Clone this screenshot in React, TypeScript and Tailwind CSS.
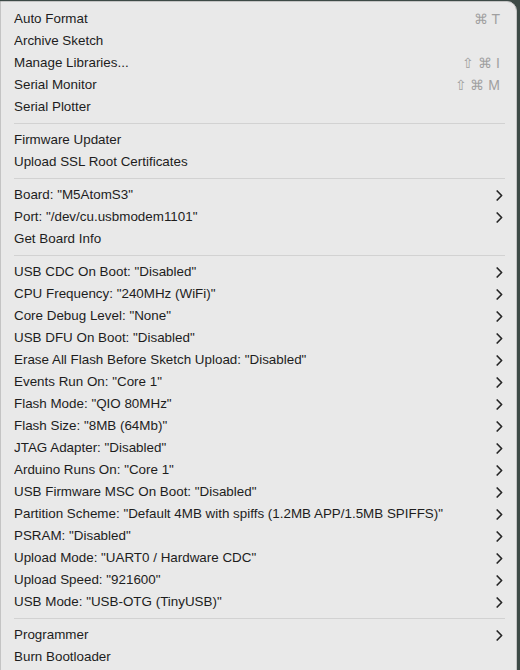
type Item = { label: string; shortcut?: string; sub?: boolean };

const groups: Item[][] = [
  [
    { label: "Auto Format", shortcut: "⌘ T" },
    { label: "Archive Sketch" },
    { label: "Manage Libraries...", shortcut: "⇧ ⌘ I" },
    { label: "Serial Monitor", shortcut: "⇧ ⌘ M" },
    { label: "Serial Plotter" },
  ],
  [{ label: "Firmware Updater" }, { label: "Upload SSL Root Certificates" }],
  [
    { label: 'Board: "M5AtomS3"', sub: true },
    { label: 'Port: "/dev/cu.usbmodem1101"', sub: true },
    { label: "Get Board Info" },
  ],
  [
    { label: 'USB CDC On Boot: "Disabled"', sub: true },
    { label: 'CPU Frequency: "240MHz (WiFi)"', sub: true },
    { label: 'Core Debug Level: "None"', sub: true },
    { label: 'USB DFU On Boot: "Disabled"', sub: true },
    { label: 'Erase All Flash Before Sketch Upload: "Disabled"', sub: true },
    { label: 'Events Run On: "Core 1"', sub: true },
    { label: 'Flash Mode: "QIO 80MHz"', sub: true },
    { label: 'Flash Size: "8MB (64Mb)"', sub: true },
    { label: 'JTAG Adapter: "Disabled"', sub: true },
    { label: 'Arduino Runs On: "Core 1"', sub: true },
    { label: 'USB Firmware MSC On Boot: "Disabled"', sub: true },
    { label: 'Partition Scheme: "Default 4MB with spiffs (1.2MB APP/1.5MB SPIFFS)"', sub: true },
    { label: 'PSRAM: "Disabled"', sub: true },
    { label: 'Upload Mode: "UART0 / Hardware CDC"', sub: true },
    { label: 'Upload Speed: "921600"', sub: true },
    { label: 'USB Mode: "USB-OTG (TinyUSB)"', sub: true },
  ],
  [{ label: "Programmer", sub: true }, { label: "Burn Bootloader" }],
];

function Chevron() {
  return (
    <svg width="7" height="11" viewBox="0 0 7 11" fill="none">
      <path d="M1.2 1 L5.6 5.5 L1.2 10" stroke="#262626" strokeWidth="1.7" strokeLinecap="round" strokeLinejoin="round" />
    </svg>
  );
}

function Row({ item }: { item: Item }) {
  return (
    <div className="flex h-[22px] items-center pl-[13px] pr-[13px]">
      <span className="flex-1 truncate">{item.label}</span>
      {item.shortcut && <span className="mr-[3px] text-[14px] text-[#a0a0a0]">{item.shortcut}</span>}
      {item.sub && <Chevron />}
    </div>
  );
}

export default function App() {
  return (
    <div className="flex h-[670px] w-[520px] overflow-hidden bg-[#3d4a46] pt-[1px]">
      <div
        className="h-[680px] w-[517px] rounded-tr-[10px] border border-[#c4c4c4] bg-[#e9e9e9] pt-[6px] text-[13.4px] text-[#1d1d1d]"
        style={{ fontFamily: '"Liberation Sans", Arial, sans-serif' }}
      >
        {groups.map((g, i) => (
          <div key={i}>
            {i > 0 && (
              <div className="flex h-[11px] items-center pl-[13px] pr-[11px]">
                <div className="h-px flex-1 bg-[#d2d2d2]" />
              </div>
            )}
            {g.map((item) => (
              <Row key={item.label} item={item} />
            ))}
          </div>
        ))}
      </div>
    </div>
  );
}
